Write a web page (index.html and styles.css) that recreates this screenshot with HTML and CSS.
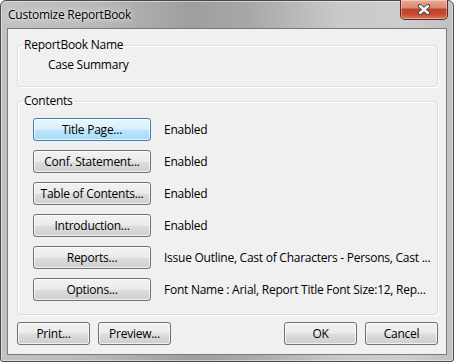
FILE: index.html
```html
<!DOCTYPE html>
<html lang="en">
<head>
    <meta charset="UTF-8">
    <title>Customize ReportBook</title>
    <link rel="stylesheet" href="styles.css">
</head>
<body>
    <div class="window">
        <div class="titlebar">
            <span class="title">Customize ReportBook</span>
            <button class="close" title="Close">
                <svg width="14" height="11" viewBox="0 0 14 11">
                    <path d="M3 2 L11 9 M11 2 L3 9" stroke="#3a3a3a" stroke-width="4.2" stroke-linecap="round"/>
                    <path d="M3 2 L11 9 M11 2 L3 9" stroke="#fff" stroke-width="2.4" stroke-linecap="round"/>
                </svg>
            </button>
        </div>

        <div class="client">
            <fieldset class="group name-group">
                <legend>ReportBook Name</legend>
                <p class="name">Case Summary</p>
            </fieldset>

            <fieldset class="group">
                <legend>Contents</legend>
                <div class="rows">
                    <div class="row">
                        <button class="btn wide focused">Title Page...</button>
                        <span class="value">Enabled</span>
                    </div>
                    <div class="row">
                        <button class="btn wide">Conf. Statement...</button>
                        <span class="value">Enabled</span>
                    </div>
                    <div class="row">
                        <button class="btn wide">Table of Contents...</button>
                        <span class="value">Enabled</span>
                    </div>
                    <div class="row">
                        <button class="btn wide">Introduction...</button>
                        <span class="value">Enabled</span>
                    </div>
                    <div class="row">
                        <button class="btn wide">Reports...</button>
                        <span class="value">Issue Outline, Cast of Characters - Persons, Cast ...</span>
                    </div>
                    <div class="row">
                        <button class="btn wide">Options...</button>
                        <span class="value">Font Name : Arial, Report Title Font Size:12, Rep...</span>
                    </div>
                </div>
            </fieldset>

            <div class="footer">
                <div class="footer-left">
                    <button class="btn">Print...</button>
                    <button class="btn">Preview...</button>
                </div>
                <div class="footer-right">
                    <button class="btn">OK</button>
                    <button class="btn">Cancel</button>
                </div>
            </div>
        </div>
    </div>
</body>
</html>
```

FILE: styles.css
```css
body {
    margin: 0;
    font-family: "Open Sans", "Noto Sans", sans-serif;
    font-size: 12px;
    letter-spacing: -0.25px;
    color: #000;
    background: #fff;
}

.window {
    width: 454px;
    height: 362px;
    box-sizing: border-box;
    border: 1px solid #4a4a4a;
    border-radius: 6px 6px 3px 3px;
    background: linear-gradient(90deg, #c2c2c2 0%, #b9b9b9 20%, #9e9e9e 42%, #a8a8a8 55%, #c9c9c9 75%, #cdcdcd 90%, #c0c0c0 100%);
    box-shadow: inset 0 0 0 1px rgba(255, 255, 255, 0.45);
    display: flex;
    flex-direction: column;
}

.titlebar {
    height: 27px;
    display: flex;
    align-items: flex-start;
    justify-content: space-between;
    padding-left: 7px;
}

.title {
    margin-top: 6px;
    line-height: 16px;
    color: #000;
    text-shadow: 0 0 8px rgba(255, 255, 255, 0.9), 0 0 3px rgba(255, 255, 255, 0.9);
}

.close {
    width: 48px;
    height: 20px;
    margin: -1px 5px 0 0;
    padding: 0;
    border: 1px solid #5c2a22;
    border-top: none;
    border-radius: 0 0 5px 5px;
    background: linear-gradient(180deg, #e9a898 0%, #d88a76 40%, #c4402a 50%, #c94a30 75%, #de7a5c 100%);
    box-shadow: inset 0 0 0 1px rgba(255, 255, 255, 0.35);
    display: flex;
    align-items: center;
    justify-content: center;
}

.client {
    flex: 1;
    margin: 0 6px 6px 6px;
    border: 1px solid #7a7a7a;
    background: #f0f0f0;
    padding: 8px 8px 0 9px;
    display: flex;
    flex-direction: column;
}

.group {
    margin: 0 0 6px 0;
    padding: 0;
    border: 1px solid #d5dfe5;
    border-radius: 3px;
    box-shadow: inset 1px 1px 0 #fff, 1px 1px 0 #fff;
}

.group legend {
    margin-left: 5px;
    padding: 0 1px;
    line-height: 16px;
}

.name-group {
    height: 50px;
    box-sizing: border-box;
}

.name {
    margin: 4px 0 0 30px;
    line-height: 16px;
}

.rows {
    padding: 9px 0 13px 15px;
    display: flex;
    flex-direction: column;
    gap: 9px;
}

.row {
    display: flex;
    align-items: center;
    gap: 13px;
}

.value {
    white-space: nowrap;
}

.btn {
    width: 73px;
    height: 23px;
    padding: 0;
    font-family: inherit;
    font-size: 12px;
    letter-spacing: inherit;
    color: #000;
    border: 1px solid #707070;
    border-radius: 3px;
    background: linear-gradient(180deg, #f2f2f2 0%, #ebebeb 48%, #dddddd 52%, #cfcfcf 100%);
    box-shadow: inset 0 0 0 1px rgba(255, 255, 255, 0.7);
}

.btn.wide {
    width: 118px;
}

.btn.focused {
    border-color: #3c7fb1;
    background: linear-gradient(180deg, #eaf6fd 0%, #d9f0fc 48%, #bee6fd 52%, #a7d9f5 100%);
}

.footer {
    margin-top: 1px;
    display: flex;
    justify-content: space-between;
}

.footer-left,
.footer-right {
    display: flex;
    gap: 8px;
}
```
